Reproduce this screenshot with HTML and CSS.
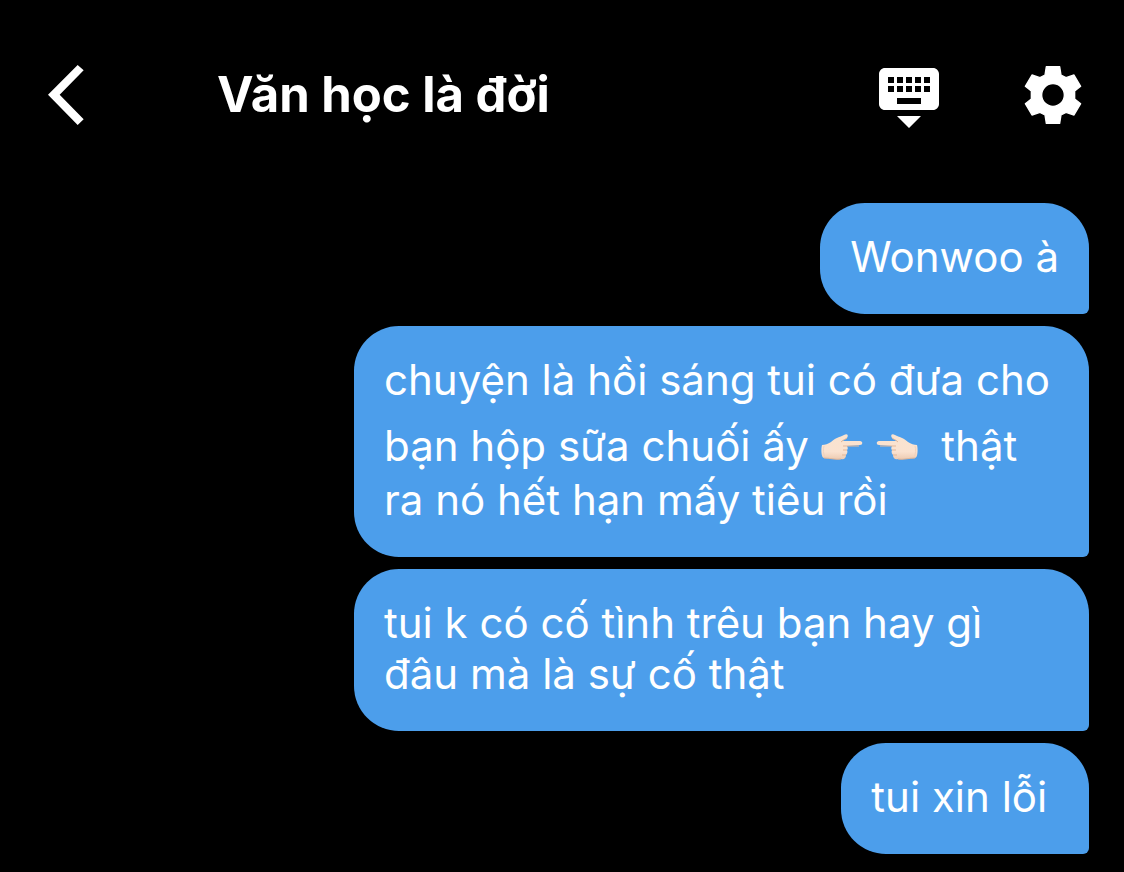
FILE: index.html
```html
<!DOCTYPE html>
<html lang="vi">
<head>
	<meta charset="UTF-8">
	<meta name="viewport" content="width=device-width, initial-scale=1">
	<title>Văn học là đời</title>
	<link rel="stylesheet" href="styles.css">
</head>
<body>
	<header class="topbar">
		<button class="back" type="button" aria-label="Quay lại">
			<svg viewBox="54 45 108 180" width="36" height="60"><path d="M54 134L143 45L161 61L89 134L161 208L143 225Z"/></svg>
		</button>
		<h1 class="title">Văn học là đời</h1>
		<div class="actions">
			<button type="button" aria-label="Ẩn bàn phím">
				<svg viewBox="0 0 24 24" width="72" height="72"><path d="M20 3H4c-1.100 0-1.990.9-1.990 2L2 15c0 1.100.9 2 2 2h16c1.100 0 2-.9 2-2V5c0-1.100-.9-2-2-2zm-9 3h2v2h-2V6zm0 3h2v2h-2V9zM8 6h2v2H8V6zm0 3h2v2H8V9zm-1 2H5V9h2v2zm0-3H5V6h2v2zm9 7H8v-2h8v2zm0-4h-2V9h2v2zm0-3h-2V6h2v2zm3 3h-2V9h2v2zm0-3h-2V6h2v2zm-7 15l4-4H8l4 4z"/></svg>
			</button>
			<button type="button" aria-label="Cài đặt">
				<svg viewBox="36 27 216 216" width="72" height="72"><path class="gear" fill-rule="evenodd" d="M124 50H164L168 75L183 83L207 75L227 109L209 123V147L227 161L207 195L183 187L168 195L164 220H124L120 195L105 187L81 195L61 161L79 147V123L61 109L81 75L105 83L120 75ZM144 101A34 34 0 1 0 144 169A34 34 0 1 0 144 101Z"/></svg>
			</button>
		</div>
	</header>
	<main class="chat">
		<p class="bubble">Wonwoo à</p>
		<p class="bubble">chuyện là hồi sáng tui có đưa cho bạn hộp sữa chuối ấy <span class="emoji" role="img" aria-label="ngón tay chỉ vào nhau"><svg viewBox="0 0 42 28" width="42" height="28"><use href="#hand"/></svg><svg viewBox="0 0 42 28" width="42" height="28"><use href="#hand" transform="translate(42 0) scale(-1 1)"/></svg></span>&nbsp; thật<br>ra nó hết hạn mấy tiêu rồi</p>
		<p class="bubble">tui k có cố tình trêu bạn hay gì đâu mà là sự cố thật</p>
		<p class="bubble">tui xin lỗi&nbsp;</p>
	</main>
	<svg class="defs" width="0" height="0" aria-hidden="true">
		<defs>
			<linearGradient id="skin" x1="0" y1="0" x2="0" y2="1">
				<stop offset="0" stop-color="#f9e3d0"/>
				<stop offset="0.700" stop-color="#fae2d0"/>
				<stop offset="1" stop-color="#edcbb2"/>
			</linearGradient>
			<g id="hand">
				<path fill="url(#skin)" d="M1 12C4 12 7 11 10 9C14 5 19 4 23 2C26 0 28 2 26 5C25 6 22 7 21 8H39C42 8 42 12 39 12L26 13C27 15 27 16 26 17C27 19 26 21 25 22C25 25 23 27 20 26C15 27 9 25 3 25C0 25 0 15 1 12Z"/>
				<path fill="none" stroke="#e3b798" d="M26 5C25 6 22 7 20 9M22 13H38M22 17H26M21 22H25M3 25C9 25 15 27 20 26"/>
				<path fill="none" stroke="#f0d2bd" d="M3 13C2 16 2 21 4 24"/>
			</g>
		</defs>
	</svg>
</body>
</html>
```
FILE: styles.css
```css
*{padding: 0; margin: 0; box-sizing: border-box;}
body{background: #000; color: #fff; font-family: Inter, "Noto Sans", sans-serif;}
button{border: 0; background: none; color: inherit; cursor: pointer;}
svg{display: block; fill: currentColor;}

.topbar{display: flex; align-items: center; padding: 59px 35px 72px 48px;}
.title{flex: 1; margin-left: 133px; font-size: 49px; line-height: 56px; font-weight: 700;}
.actions{display: flex; gap: 72px;}
.gear{stroke: currentColor; stroke-width: 4px; stroke-linejoin: round;}

.chat{display: flex; flex-direction: column; align-items: flex-end; gap: 12px; padding: 0 35px 18px 39px;}
.bubble{
	max-width: 70%; padding: 28px 30px 32px; border-radius: 45px 45px 6px 45px;
	background: #4c9eeb; font-size: 42px; line-height: 51px;
}
/* emoji make their line taller, as on the phone */
.emoji{display: inline-flex; gap: 13px; height: 69px; padding: 28px 0 13px; vertical-align: baseline;}
.defs{position: absolute;}
```
